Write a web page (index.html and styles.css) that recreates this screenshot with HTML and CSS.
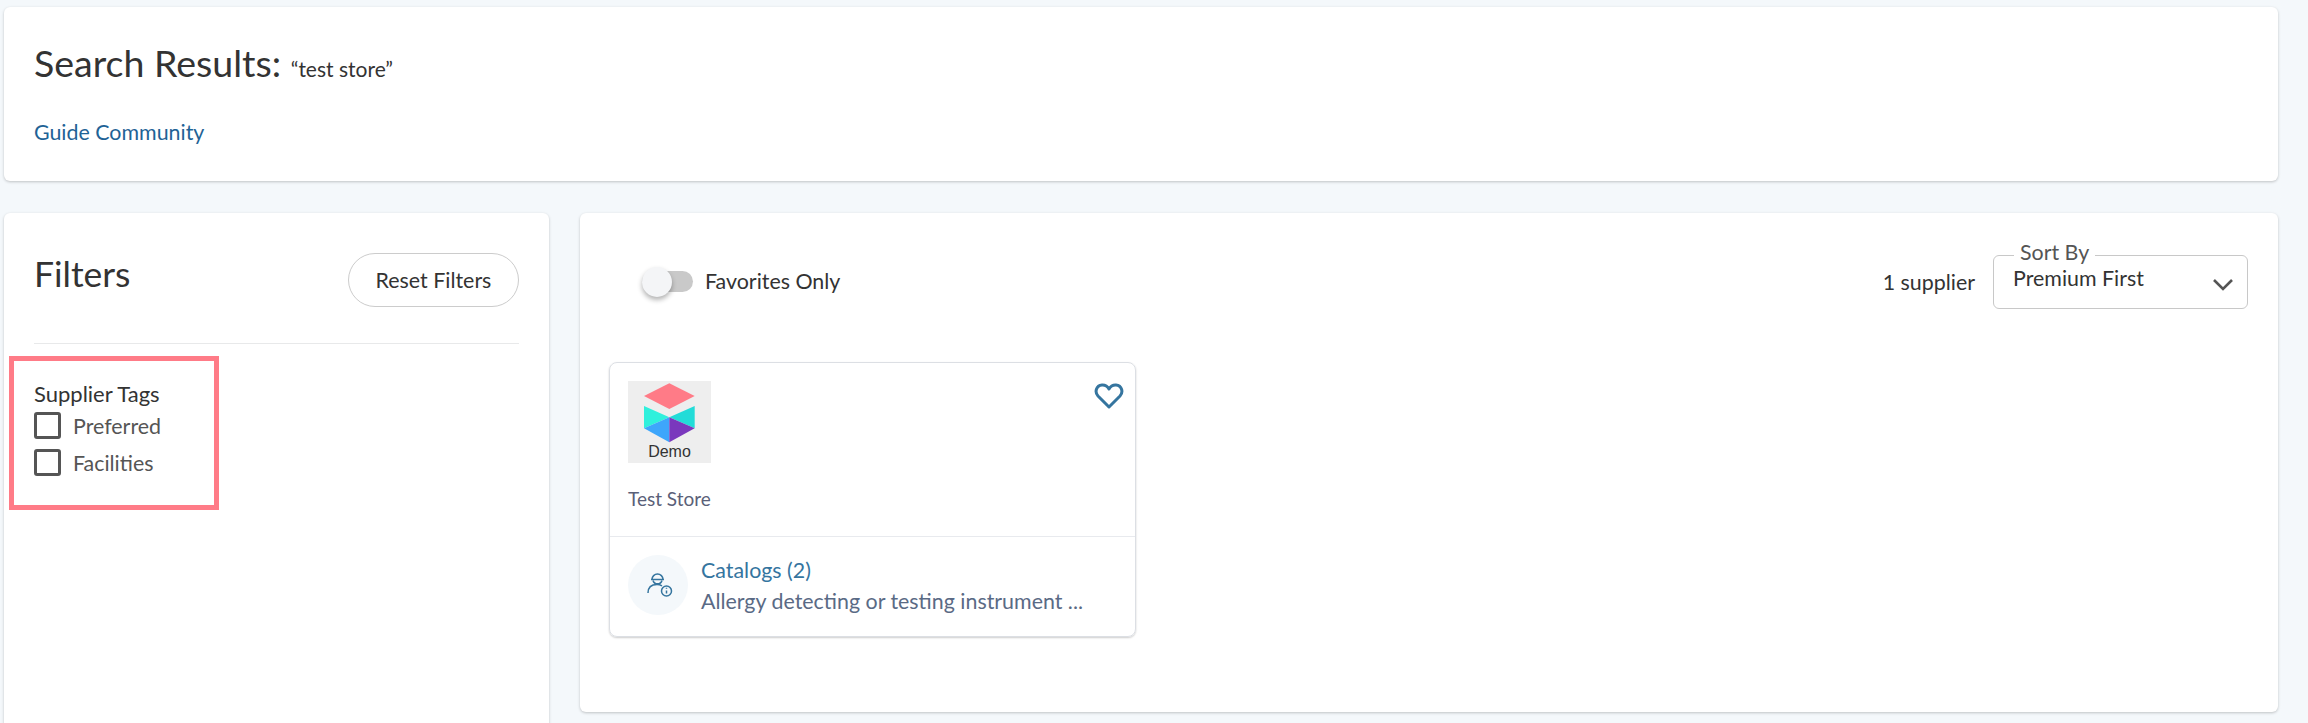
FILE: index.html
```html
<!DOCTYPE html>
<html lang="en">
<head>
<meta charset="utf-8">
<title>Search Results</title>
<link rel="stylesheet" href="styles.css">
</head>
<body>
<div class="page">
  <header class="card head">
    <h1 class="title">Search Results: <span class="query">“test store”</span></h1>
    <a class="guide" href="#">Guide Community</a>
  </header>
  <div class="columns">
    <aside class="card filters">
      <div class="filters-top">
        <h2 class="filters-title">Filters</h2>
        <button class="reset" type="button">Reset Filters</button>
      </div>
      <section class="tags">
        <div class="tags-title">Supplier Tags</div>
        <label class="check"><span class="box"></span>Preferred</label>
        <label class="check"><span class="box"></span>Facilities</label>
      </section>
    </aside>
    <main class="card results">
      <div class="toolbar">
        <div class="fav">
          <span class="switch"><span class="knob"></span></span>
          <span>Favorites Only</span>
        </div>
        <div class="sort-area">
          <span class="count">1 supplier</span>
          <div class="select">
            <span class="select-label">Sort By</span>
            <span class="select-value">Premium First</span>
            <svg class="chev" width="22" height="14" viewBox="0 0 22 14"><path d="M2 2l9 9 9-9" fill="none" stroke="#555" stroke-width="2.600"/></svg>
          </div>
        </div>
      </div>
      <article class="supplier">
        <div class="supplier-top">
          <div class="logo">
            <svg class="logo-art" width="83" height="62" viewBox="0 0 83 62">
              <path d="M41.3 2.300L66.700 15 41.300 28 16 15z" fill="#ff7b87"/>
              <path d="M16 25l25.300 11.300L16 47.300z" fill="#2ff0dc"/>
              <path d="M66.700 25L41.300 36.300l25.400 11z" fill="#22dcd8"/>
              <path d="M16 47.300l25.300-11v25z" fill="#3ea6fb"/>
              <path d="M66.700 47.300l-25.400-11v25z" fill="#7a38bd"/>
            </svg>
            <span class="logo-text">Demo</span>
          </div>
          <svg class="heart" width="30" height="26" viewBox="0 0 30 26"><path d="M15 24L4 13C.5 9.300 2 2.500 8 2c3-.2 5.500 1.300 7 4 1.500-2.700 4-4.200 7-4 6 .5 7.500 7.300 4 11z" fill="none" stroke="#35759f" stroke-width="3" stroke-linejoin="round"/></svg>
          <div class="supplier-name">Test Store</div>
        </div>
        <div class="supplier-foot">
          <span class="circle">
            <svg width="60" height="60" viewBox="0 0 60 60" fill="none" stroke="#35759f" stroke-width="1.500">
              <path d="M24 24.500a5.500 5.500 0 0 1 11 0"/>
              <path d="M23 24.500h13"/>
              <path d="M25 25.500a4.700 4.700 0 0 0 9 0"/>
              <path d="M20 38c0-5.500 3.500-8.500 9-8.500 2 0 3.500.4 5 1.300"/>
              <circle cx="38.500" cy="36" r="5"/>
              <path d="M38.500 35.500v3M38.500 32.800v1"/>
            </svg>
          </span>
          <div class="foot-text">
            <a class="catalogs" href="#">Catalogs (2)</a>
            <div class="desc">Allergy detecting or testing instrument ...</div>
          </div>
        </div>
      </article>
    </main>
  </div>
</div>
</body>
</html>
```
FILE: styles.css
```css
* { box-sizing: border-box; }
html, body { height: 100%; overflow: hidden; }
body {
  margin: 0;
  background: #f4f8fb;
  color: #333;
  font-family: "Lato", "Noto Sans", sans-serif;
  font-size: 21.4px;
}
.page { padding: 7px 30px 0 4px; }
.card {
  background: #fff;
  border-radius: 6px;
  box-shadow: 0 1px 3px rgba(0, 0, 0, .22);
}
.head { height: 174px; padding: 0 30px; }
.title {
  margin: 0;
  padding-top: 31px;
  font-size: 37.5px;
  line-height: 50px;
  font-weight: 400;
  color: #333;
}
.query { font-size: 21px; }
.guide {
  display: block;
  margin-top: 25px;
  color: #1f6396;
  text-decoration: none;
  line-height: 26px;
}
.columns {
  display: grid;
  grid-template-columns: 545px 1698px;
  column-gap: 31px;
  margin-top: 32px;
  align-items: start;
}
.filters { height: 600px; padding: 40px 30px 0; }
.filters-top {
  display: flex;
  justify-content: space-between;
  align-items: flex-start;
  height: 91px;
  border-bottom: 1px solid #e8e9ea;
}
.filters-title {
  margin: 0;
  font-size: 35.5px;
  line-height: 42px;
  font-weight: 400;
}
.reset {
  width: 171px;
  height: 54px;
  border: 1px solid #ccc;
  border-radius: 27px;
  background: #fff;
  color: #333;
  font: inherit;
}
.tags {
  width: 210px;
  height: 154px;
  margin: 12px 0 0 -25px;
  padding: 20px 0 0 20px;
  border: 5px solid #ff7b87;
}
.tags-title { line-height: 26px; font-size: 22px; }
.check {
  display: flex;
  align-items: center;
  gap: 12px;
  height: 27px;
  margin-top: 10px;
  color: #555;
}
.tags-title + .check { margin-top: 5px; }
.box {
  width: 27px;
  height: 27px;
  border: 3px solid #555;
  border-radius: 3px;
}
.results { height: 499px; padding: 0 30px 0 29px; }
.toolbar {
  display: flex;
  justify-content: space-between;
  height: 149px;
  padding-top: 41px;
}
.fav {
  display: flex;
  align-items: center;
  gap: 12px;
  height: 54px;
  padding-left: 33px;
}
.switch {
  display: block;
  position: relative;
  width: 51px;
  height: 21px;
  border-radius: 11px;
  background: #c9c9c9;
}
.knob {
  position: absolute;
  left: 0;
  top: -4px;
  width: 30px;
  height: 30px;
  border-radius: 50%;
  background: #f4f5f7;
  box-shadow: 0 3px 5px rgba(0, 0, 0, .3);
}
.sort-area {
  display: flex;
  align-items: center;
  gap: 18px;
  height: 54px;
  margin-top: 1px;
}
.select {
  position: relative;
  display: flex;
  justify-content: space-between;
  align-items: center;
  width: 255px;
  height: 54px;
  padding: 0 13px 0 19px;
  border: 1px solid #c8c8c8;
  border-radius: 6px;
}
.select-label {
  position: absolute;
  left: 20px;
  top: -17px;
  padding: 0 6px;
  background: #fff;
  color: #555;
  line-height: 26px;
}
.select-value { margin-top: -8px; }
.chev { margin-top: 6px; }
.supplier {
  width: 527px;
  height: 275px;
  border: 1px solid #dcdfe4;
  border-radius: 8px;
  box-shadow: 0 1px 2px rgba(0, 0, 0, .2);
}
.supplier-top {
  position: relative;
  height: 174px;
  padding: 18px 18px 0;
  border-bottom: 1px solid #e8eaee;
}
.logo {
  display: flex;
  flex-direction: column;
  align-items: center;
  width: 83px;
  height: 82px;
  background: #eee;
}
.logo-art { flex: none; }
.logo-text {
  font-family: "Liberation Sans", Arial, sans-serif;
  font-size: 16px;
  line-height: 18px;
  color: #333;
}
.heart { position: absolute; right: 11px; top: 20px; }
.supplier-name {
  margin-top: 24px;
  font-size: 19px;
  line-height: 24px;
  color: #5a6078;
}
.supplier-foot {
  display: flex;
  gap: 13px;
  padding: 18px 18px 0;
}
.circle {
  flex: none;
  width: 60px;
  height: 60px;
  border-radius: 50%;
  background: #f4f8fb;
}
.foot-text { line-height: 31px; margin-top: 0; }
.catalogs { color: #35759f; text-decoration: none; display: block; }
.desc { color: #5a6a85; }
```
